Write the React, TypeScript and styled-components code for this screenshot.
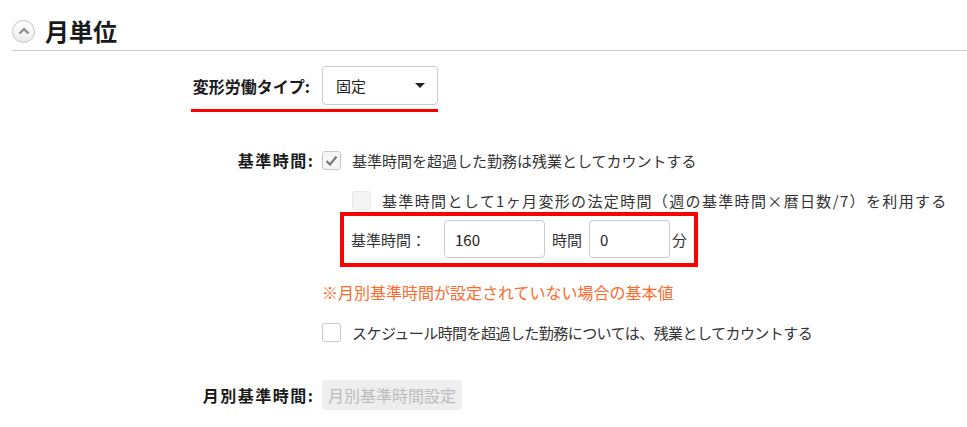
import styled, { createGlobalStyle } from "styled-components";

const GlobalStyle = createGlobalStyle`
  body {
    margin: 0;
    background: #fff;
    color: #333;
    font-family: "Noto Sans CJK JP", "Noto Sans", sans-serif;
    font-size: 15px;
  }
`;

const Page = styled.div`
  width: 967px;
  height: 427px;
  overflow: hidden;
`;

const Header = styled.div`
  align-items: center;
  border-bottom: 1px solid #ccc;
  display: flex;
  gap: 10px;
  height: 38px;
  margin-left: 12px;
  padding-top: 12px;
`;

const ToggleIcon = styled.div`
  align-items: center;
  background: linear-gradient(#fff, #ebebeb);
  border: 1px solid #c4c4c4;
  border-radius: 50%;
  box-sizing: border-box;
  display: flex;
  height: 23px;
  justify-content: center;
  width: 23px;
`;

const Title = styled.h2`
  color: #1a1a1a;
  font-size: 24px;
  font-weight: 700;
  line-height: 30px;
  margin: 0;
`;

const Form = styled.div`
  display: flex;
  flex-direction: column;
`;

const Highlight = styled.div`
  align-self: flex-start;
  align-items: center;
  border-bottom: 3px solid #f00;
  display: flex;
  gap: 12px;
  margin-left: 191px;
  margin-top: 15px;
  padding-bottom: 4px;
`;

const TypeLabel = styled.label`
  color: #1a1a1a;
  font-size: 16px;
  font-weight: 700;
  text-align: right;
  white-space: nowrap;
  width: 119px;
`;

const Select = styled.div`
  align-items: center;
  border: 1px solid #ccc;
  border-radius: 4px;
  box-sizing: border-box;
  color: #222;
  display: flex;
  height: 39px;
  justify-content: space-between;
  padding: 0 12px 0 13px;
  width: 116px;
`;

const Caret = styled.span`
  border-left: 5px solid transparent;
  border-right: 5px solid transparent;
  border-top: 5px solid #222;
  height: 0;
  width: 0;
`;

const FieldRow = styled.div<{ $top: number; $center?: boolean }>`
  align-items: ${({ $center }) => ($center ? "center" : "start")};
  column-gap: 9px;
  display: grid;
  grid-template-columns: 313px 1fr;
  margin-top: ${({ $top }) => $top}px;
`;

const FieldLabel = styled.label`
  color: #1a1a1a;
  font-size: 16px;
  font-weight: 700;
  letter-spacing: 1.5px;
  line-height: 20px;
  margin-right: -1.5px;
  text-align: right;
  white-space: nowrap;
`;

const FieldBody = styled.div`
  align-items: flex-start;
  display: flex;
  flex-direction: column;
`;

const CheckLine = styled.div<{ $top?: number; $indent?: number; $spacing?: number }>`
  align-items: center;
  display: flex;
  gap: 11px;
  height: 20px;
  letter-spacing: ${({ $spacing = 0 }) => $spacing}px;
  margin-left: ${({ $indent = 0 }) => $indent}px;
  margin-top: ${({ $top = 0 }) => $top}px;
  white-space: nowrap;
`;

const Box = styled.span<{ $disabled?: boolean; $checked?: boolean }>`
  align-items: center;
  background: ${({ $disabled, $checked }) =>
    $disabled ? "#f4f4f4" : $checked ? "#f6f6f6" : "#fff"};
  border: 1px solid ${({ $disabled }) => ($disabled ? "#e8e8e8" : "#c8c8c8")};
  border-radius: 3px;
  box-sizing: border-box;
  display: flex;
  flex: none;
  height: 19px;
  justify-content: center;
  width: 19px;
`;

const HoursBox = styled.div`
  align-items: center;
  border: 4px solid #f00;
  display: flex;
  margin-left: 18px;
  margin-top: 2px;
  padding: 4px 5px 5px 7px;
  white-space: nowrap;
`;

const HoursLabel = styled.span`
  margin-right: 18px;
`;

const Input = styled.div<{ $width: number }>`
  align-items: center;
  border: 1px solid #ccc;
  border-radius: 4px;
  box-sizing: border-box;
  color: #222;
  display: flex;
  height: 38px;
  padding-left: 10px;
  width: ${({ $width }) => $width}px;
`;

const Unit = styled.span<{ $gap: number }>`
  margin: 0 ${({ $gap }) => $gap}px;
`;

const Note = styled.div`
  color: #ff6a2b;
  font-size: 16px;
  line-height: 20px;
  margin-top: 15px;
`;

const DisabledButton = styled.button`
  background: #eee;
  border: none;
  border-radius: 4px;
  color: #bbb;
  font-family: inherit;
  font-size: 16px;
  height: 30px;
  padding: 0 6px;
`;

const Check = () => (
  <svg width="13" height="11" viewBox="0 0 13 11">
    <polyline points="1.5,6 5,9.5 11.5,1.5" fill="none" stroke="#7a7a7a" strokeWidth="2.2" />
  </svg>
);

export default function App() {
  return (
    <Page>
      <GlobalStyle />
      <Header>
        <ToggleIcon>
          <svg width="12" height="8" viewBox="0 0 12 8">
            <polyline points="1.5,6.5 6,2 10.5,6.5" fill="none" stroke="#8a8a8a" strokeWidth="2.2" />
          </svg>
        </ToggleIcon>
        <Title>月単位</Title>
      </Header>
      <Form>
        <Highlight>
          <TypeLabel>変形労働タイプ:</TypeLabel>
          <Select>
            固定
            <Caret />
          </Select>
        </Highlight>

        <FieldRow $top={38}>
          <FieldLabel>基準時間:</FieldLabel>
          <FieldBody>
            <CheckLine>
              <Box $checked>
                <Check />
              </Box>
              基準時間を超過した勤務は残業としてカウントする
            </CheckLine>
            <CheckLine $top={20} $indent={30} $spacing={1.35}>
              <Box $disabled />
              基準時間として1ヶ月変形の法定時間（週の基準時間×暦日数/7）を利用する
            </CheckLine>
            <HoursBox>
              <HoursLabel>基準時間：</HoursLabel>
              <Input $width={101}>160</Input>
              <Unit $gap={7}>時間</Unit>
              <Input $width={81}>0</Input>
              <Unit $gap={2}>分</Unit>
            </HoursBox>
            <Note>※月別基準時間が設定されていない場合の基本値</Note>
            <CheckLine $top={20} $spacing={-0.55}>
              <Box />
              スケジュール時間を超過した勤務については、残業としてカウントする
            </CheckLine>
          </FieldBody>
        </FieldRow>

        <FieldRow $top={38} $center>
          <FieldLabel>月別基準時間:</FieldLabel>
          <FieldBody>
            <DisabledButton disabled>月別基準時間設定</DisabledButton>
          </FieldBody>
        </FieldRow>
      </Form>
    </Page>
  );
}
